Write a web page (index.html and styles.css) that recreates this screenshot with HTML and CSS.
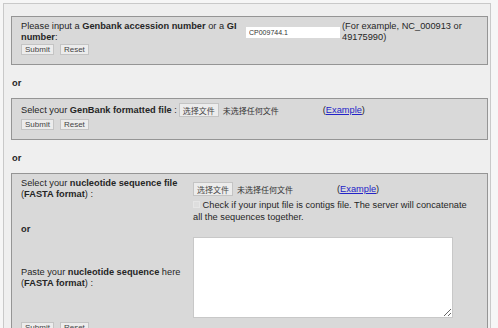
FILE: index.html
```html
<!DOCTYPE html>
<html lang="en">
  <head>
    <meta charset="UTF-8" />
    <title>Sequence input</title>
    <link rel="stylesheet" href="styles.css">
  </head>

  <body>
    <div class="page">
      <!-- accession number -->
      <div class="panel">
        <div class="acc-row">
          <div class="label">Please input a <b>Genbank accession number</b> or a <b>GI number</b>:</div>
          <div class="field"><input type="text" class="acc" value="CP009744.1" /></div>
          <div class="hint">(For example, NC_000913 or 49175990)</div>
        </div>
        <div class="btns">
          <button type="button">Submit</button>
          <button type="button">Reset</button>
        </div>
      </div>

      <p class="or">or</p>

      <!-- genbank file -->
      <div class="panel">
        <div class="file-row">
          <span class="label-inline">Select your <b>GenBank formatted file</b> :</span>
          <span class="file"><button type="button" class="file-btn">选择文件</button><span class="file-name">未选择任何文件</span></span>
          <span>(<a href="#">Example</a>)</span>
        </div>
        <div class="btns">
          <button type="button">Submit</button>
          <button type="button">Reset</button>
        </div>
      </div>

      <p class="or">or</p>

      <!-- fasta -->
      <div class="panel">
        <div class="fasta">
          <div class="fasta-label">Select your <b>nucleotide sequence file</b> (<b>FASTA format</b>) :</div>
          <div class="fasta-input">
            <div class="file-line">
              <span class="file"><button type="button" class="file-btn">选择文件</button><span class="file-name">未选择任何文件</span></span>
              <span>(<a href="#">Example</a>)</span>
            </div>
            <div class="contigs"><span class="check"></span> Check if your input file is contigs file. The server will concatenate all the sequences together.</div>
          </div>

          <div class="fasta-or"><b>or</b></div>
          <div></div>

          <div class="fasta-label mid">Paste your <b>nucleotide sequence</b> here (<b>FASTA format</b>) :</div>
          <div><textarea></textarea></div>
        </div>
        <div class="btns fasta-btns">
          <button type="button">Submit</button>
          <button type="button">Reset</button>
        </div>
      </div>
    </div>
  </body>
</html>
```

FILE: styles.css
```css
body {
  margin: 0;
  padding: 0;
  background-color: #f6f6f6;
  font-family: "Liberation Sans", Arial, sans-serif;
  font-size: 9.25px;
  line-height: 11px;
  color: #262626;
}

.page {
  width: 488px;
  min-height: 340px;
  margin: 3px 0 0 3px;
  padding: 12px 2px 0 7px;
  box-sizing: border-box;
  border: 1px solid #c9c9c9;
  border-bottom: none;
  background-color: #efefef;
}

.panel {
  padding: 4px 9px 9px 9px;
  border: 1px solid #959595;
  background-color: #d9d9d9;
}

.or {
  margin: 13px 0 9px 1px;
  font-weight: bold;
}

a {
  color: #2424c8;
}

/* row 1 */
.acc-row {
  display: flex;
  align-items: center;
}

.acc-row .label {
  width: 225px;
}

.acc-row .field {
  width: 96px;
}

input.acc {
  display: block;
  width: 94px;
  height: 11px;
  padding: 0 0 0 3px;
  box-sizing: border-box;
  border: none;
  background-color: #fff;
  font-family: "Liberation Sans", Arial, sans-serif;
  font-size: 7px;
  color: #333;
}

.acc-row .hint {
  width: 128px;
}

.btns {
  display: flex;
  gap: 6px;
  margin-top: 1px;
}

button {
  height: 11px;
  margin: 0;
  padding: 0 3px;
  border: 1px solid #c4c4c4;
  background-color: #ececec;
  font-family: "Liberation Sans", Arial, sans-serif;
  font-size: 8px;
  line-height: 9px;
  color: #444;
}

/* file picker */
.file-row {
  display: flex;
  align-items: center;
  height: 14px;
  margin-bottom: 2px;
}

.label-inline {
  margin-right: 2px;
}

.file {
  display: inline-flex;
  align-items: center;
  width: 144px;
}

.file-btn {
  height: 14px;
  margin-right: 4px;
  padding: 0 3px;
  font-family: "Noto Sans CJK SC", sans-serif;
  font-size: 8px;
}

.file-name {
  font-family: "Noto Sans CJK SC", sans-serif;
  font-size: 8px;
  color: #333;
}

/* fasta block */
.fasta {
  display: grid;
  grid-template-columns: 172px 1fr;
}

.fasta-label.mid {
  align-self: center;
  margin-top: 3px;
}

.file-line {
  display: flex;
  align-items: center;
  margin-top: 4px;
  height: 14px;
}

.contigs {
  margin-top: 3px;
  line-height: 12px;
}

.check {
  display: inline-block;
  width: 5px;
  height: 5px;
  border: 1px solid #e6e6e6;
  background-color: #dedede;
}

.fasta-or {
  margin-top: 1px;
}

textarea {
  display: block;
  width: 260px;
  height: 81px;
  margin-top: 2px;
  box-sizing: border-box;
  border: 1px solid #c8c8c8;
  background-color: #fff;
  resize: both;
}

.fasta-btns {
  margin-top: 4px;
}
```
